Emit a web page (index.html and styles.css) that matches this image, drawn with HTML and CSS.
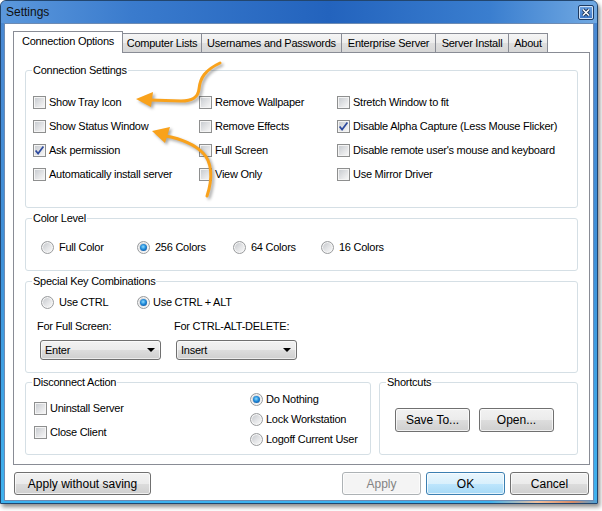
FILE: index.html
```html
<!DOCTYPE html>
<html lang="en">
<head>
    <meta charset="UTF-8">
    <title>Settings</title>
    <link rel="stylesheet" href="styles.css">
</head>
<body>
    <div class="window">
        <div class="titlebar">
            <span class="title">Settings</span>
            <span class="close-btn">
                <svg width="10" height="9" viewBox="0 0 10 9">
                    <path d="M2 1.5 L8 7.5 M8 1.5 L2 7.5" stroke="#1b3354" stroke-width="3.2"/>
                    <path d="M2 1.5 L8 7.5 M8 1.5 L2 7.5" stroke="#fff" stroke-width="1.5"/>
                </svg>
            </span>
        </div>
        <div class="client">
            <div class="tabs">
                <div class="tab active tab-conn">Connection Options</div>
                <div class="tab tab-lists">Computer Lists</div>
                <div class="tab tab-users">Usernames and Passwords</div>
                <div class="tab tab-enterprise">Enterprise Server</div>
                <div class="tab tab-install">Server Install</div>
                <div class="tab tab-about">About</div>
            </div>
            <div class="panel">
                <fieldset class="group conn-group">
                    <legend>Connection Settings</legend>
                    <div class="check-grid">
                        <div class="opt"><span class="check"></span>Show Tray Icon</div>
                        <div class="opt"><span class="check"></span>Remove Wallpaper</div>
                        <div class="opt"><span class="check"></span>Stretch Window to fit</div>
                        <div class="opt"><span class="check"></span>Show Status Window</div>
                        <div class="opt"><span class="check"></span>Remove Effects</div>
                        <div class="opt"><span class="check"><svg width="11" height="11" viewBox="0 0 11 11"><path d="M1.6 5.4 L4.1 8.6 L9.4 1.6" fill="none" stroke="#2d4a9e" stroke-width="1.7"/></svg></span>Disable Alpha Capture (Less Mouse Flicker)</div>
                        <div class="opt"><span class="check"><svg width="11" height="11" viewBox="0 0 11 11"><path d="M1.6 5.4 L4.1 8.6 L9.4 1.6" fill="none" stroke="#2d4a9e" stroke-width="1.7"/></svg></span>Ask permission</div>
                        <div class="opt"><span class="check"></span>Full Screen</div>
                        <div class="opt"><span class="check"></span>Disable remote user's mouse and keyboard</div>
                        <div class="opt"><span class="check"></span>Automatically install server</div>
                        <div class="opt"><span class="check"></span>View Only</div>
                        <div class="opt"><span class="check"></span>Use Mirror Driver</div>
                    </div>
                </fieldset>

                <fieldset class="group color-group">
                    <legend>Color Level</legend>
                    <div class="radio-row">
                        <div class="ropt"><span class="radio"></span>Full Color</div>
                        <div class="ropt"><span class="radio on"></span>256 Colors</div>
                        <div class="ropt"><span class="radio"></span>64 Colors</div>
                        <div class="ropt"><span class="radio"></span>16 Colors</div>
                    </div>
                </fieldset>

                <fieldset class="group keys-group">
                    <legend>Special Key Combinations</legend>
                    <div class="radio-row keys-row">
                        <div class="ropt"><span class="radio"></span>Use CTRL</div>
                        <div class="ropt tight"><span class="radio on"></span>Use CTRL + ALT</div>
                    </div>
                    <div class="combo-row">
                        <div class="combo-field">
                            <div class="combo-label">For Full Screen:</div>
                            <div class="combo first">Enter<span class="combo-arrow"></span></div>
                        </div>
                        <div class="combo-field">
                            <div class="combo-label">For CTRL-ALT-DELETE:</div>
                            <div class="combo second">Insert<span class="combo-arrow"></span></div>
                        </div>
                    </div>
                </fieldset>

                <div class="bottom-row">
                    <fieldset class="group disc-group">
                        <legend>Disconnect Action</legend>
                        <div class="disc-body">
                            <div class="disc-checks">
                                <div class="opt row24"><span class="check"></span>Uninstall Server</div>
                                <div class="opt row24"><span class="check"></span>Close Client</div>
                            </div>
                            <div class="disc-radios">
                                <div class="ropt row20 tight"><span class="radio on"></span>Do Nothing</div>
                                <div class="ropt row20 tight"><span class="radio"></span>Lock Workstation</div>
                                <div class="ropt row20 tight"><span class="radio"></span>Logoff Current User</div>
                            </div>
                        </div>
                    </fieldset>
                    <fieldset class="group short-group">
                        <legend>Shortcuts</legend>
                        <div class="short-body">
                            <button class="btn short-btn">Save To...</button>
                            <button class="btn short-btn">Open...</button>
                        </div>
                    </fieldset>
                </div>
            </div>

            <div class="footer">
                <button class="btn wide-btn">Apply without saving</button>
                <div class="spacer"></div>
                <button class="btn dlg-btn" disabled>Apply</button>
                <button class="btn dlg-btn default">OK</button>
                <button class="btn dlg-btn">Cancel</button>
            </div>
        </div>
    </div>

    <!-- callout arrows drawn over the dialog -->
    <svg class="arrows" width="602" height="511" viewBox="0 0 602 511">
        <g fill="none" stroke="#f9a21c" stroke-width="3" stroke-linecap="round">
            <path d="M220 63 C 205 70 200 78 199 89 C 198 98 192 101 181 101 L 150 100"/>
            <path d="M207 196 C 213 178 212 162 203 153 C 194 144 182 139 166 136"/>
        </g>
        <g fill="#f9a21c">
            <polygon points="136,99 153,92 151,107"/>
            <polygon points="152,131 170,127 165,143"/>
        </g>
    </svg>
</body>
</html>
```

FILE: styles.css
```css
body {
    margin: 0;
    width: 602px;
    height: 511px;
    overflow: hidden;
    background: #fff;
    font-family: "Liberation Sans", Arial, sans-serif;
    font-size: 11px;
    letter-spacing: -0.25px;
    color: #000;
}

/* window frame */
.window {
    width: 598px;
    height: 504px;
    box-sizing: border-box;
    border: 1px solid #22466f;
    border-radius: 6px 6px 0 0;
    padding: 0 3px 2px 3px;
    display: flex;
    flex-direction: column;
    background:
        linear-gradient(to right, #3cb2f0 0%, #3cb2f0 82%, #f2c09c 90%, #d58a66 96%, #4aa2dc 100%) bottom / 100% 3px no-repeat,
        linear-gradient(to bottom, #4a88d2 0%, #3f90d8 50%, #3fb2ef 100%);
    box-shadow: 2px 3px 4px rgba(0, 0, 0, 0.45);
}
.titlebar {
    height: 22px;
    margin: 0 -3px;
    padding: 0 3px 0 5px;
    display: flex;
    justify-content: space-between;
    align-items: flex-start;
    border-radius: 5px 5px 0 0;
    background: linear-gradient(to right, #5b98dc 0%, #3a7bcd 22%, #2363bd 55%, #3a7ecf 82%, #71a9e2 100%);
}
.title {
    font-size: 12px;
    letter-spacing: 0;
    line-height: 22px;
    color: #101010;
}
.close-btn {
    margin-top: 4px;
    width: 16px;
    height: 15px;
    box-sizing: border-box;
    border: 1px solid #1e3a60;
    border-radius: 2px;
    box-shadow: inset 0 0 0 1px #cfe1f6;
    background: linear-gradient(#6fa4e2, #3a75c6);
    display: flex;
    align-items: center;
    justify-content: center;
}
.client {
    flex: 1;
    background: #fff;
    border: 1px solid #6d8bb3;
    display: flex;
    flex-direction: column;
}

/* tabs */
.tabs {
    display: flex;
    align-items: flex-end;
    height: 21px;
    margin: 7px 0 0 8px;
}
.tab {
    height: 19px;
    box-sizing: border-box;
    border: 1px solid #898c95;
    border-bottom: none;
    margin-left: -1px;
    text-align: center;
    line-height: 18px;
    white-space: nowrap;
    background: linear-gradient(#f5f5f5 0%, #ececec 50%, #dfdfdf 50%, #d6d6d6 100%);
}
.tab:first-child {
    margin-left: 0;
}
.tab.active {
    height: 22px;
    margin-bottom: -1px;
    line-height: 19px;
    background: #fff;
    position: relative;
    z-index: 1;
}
.tab-conn { width: 110px; }
.tab-lists { width: 80px; }
.tab-users { width: 141px; }
.tab-enterprise { width: 95px; }
.tab-install { width: 74px; }
.tab-about { width: 40px; }

.panel {
    margin-left: 8px;
    width: 577px;
    height: 413px;
    box-sizing: border-box;
    border: 1px solid #898c95;
    padding: 10px 11px 0;
    background: #fff;
}

/* group boxes */
.group {
    margin: 0;
    padding: 0;
    min-width: 0;
    box-sizing: border-box;
    border: 1px solid #d5dfe5;
    border-radius: 3px;
}
.group legend {
    margin-left: 6px;
    padding: 0 1px;
    line-height: 14px;
}
.conn-group { height: 145px; }
.color-group { height: 60px; margin-top: 3px; }
.keys-group { height: 99px; margin-top: 3px; }
.bottom-row {
    display: flex;
    gap: 8px;
    margin-top: 2px;
}
.disc-group { width: 346px; height: 80px; }
.short-group { flex: 1; height: 80px; }

/* checkboxes and radios */
.check-grid {
    display: grid;
    grid-template-columns: 166px 138px 1fr;
    grid-auto-rows: 24px;
    margin: 13px 0 0 7px;
}
.opt, .ropt {
    display: flex;
    align-items: center;
    white-space: nowrap;
}
.opt { gap: 3px; }
.ropt { gap: 5px; }
.ropt.tight { gap: 3px; }
.check {
    width: 13px;
    height: 13px;
    flex: none;
    box-sizing: border-box;
    border: 1px solid #8e8f8f;
    box-shadow: inset 0 0 0 1px #f4f4f4;
    background: linear-gradient(135deg, #c4c8cd 0%, #e3e4e6 55%, #fafafa 100%);
}
.check svg {
    display: block;
}
.radio {
    width: 13px;
    height: 13px;
    flex: none;
    box-sizing: border-box;
    border: 1px solid #9a9c9e;
    border-radius: 50%;
    box-shadow: inset 0 0 0 1px #f6f6f6;
    background: linear-gradient(135deg, #c2c5c9 0%, #e4e5e7 55%, #fbfbfb 100%);
    display: flex;
    align-items: center;
    justify-content: center;
}
.radio.on::after {
    content: "";
    width: 7px;
    height: 7px;
    border-radius: 50%;
    background: radial-gradient(circle at 45% 40%, #8fdcff 0%, #1f8ad9 45%, #0b3f8a 100%);
}

.radio-row {
    display: grid;
    grid-template-columns: 96px 96px 88px auto;
    height: 16px;
    margin: 14px 0 0 15px;
}
.radio-row.keys-row {
    margin-top: 6px;
}

/* dropdowns */
.combo-row {
    display: grid;
    grid-template-columns: 137px 1fr;
    margin: 9px 0 0 11px;
}
.combo-label {
    line-height: 14px;
}
.combo {
    width: 121px;
    height: 20px;
    margin-top: 7px;
    box-sizing: border-box;
    border: 1px solid #707070;
    border-radius: 3px;
    padding: 0 5px 0 4px;
    display: flex;
    align-items: center;
    justify-content: space-between;
    box-shadow: inset 0 0 0 1px rgba(255, 255, 255, 0.6);
    background: linear-gradient(#f2f2f2 0%, #ebebeb 50%, #dddddd 50%, #cfcfcf 100%);
}
.combo.first { margin-left: 3px; }
.combo.second { margin-left: 2px; }
.combo-arrow {
    width: 0;
    height: 0;
    border-left: 4px solid transparent;
    border-right: 4px solid transparent;
    border-top: 4px solid #000;
}

/* disconnect action */
.disc-body {
    display: flex;
}
.disc-checks {
    width: 216px;
    padding: 7px 0 0 8px;
}
.row24 { height: 24px; }
.row20 { height: 20px; }

/* buttons */
.btn {
    height: 23px;
    box-sizing: border-box;
    border: 1px solid #707070;
    border-radius: 3px;
    padding: 0;
    font-family: "Liberation Sans", Arial, sans-serif;
    font-size: 12px;
    color: #000;
    box-shadow: inset 0 0 0 1px rgba(255, 255, 255, 0.7);
    background: linear-gradient(#f2f2f2 0%, #ebebeb 50%, #dddddd 50%, #cfcfcf 100%);
}
.btn.default {
    border-color: #3c7fb1;
    background: linear-gradient(#eaf6fd 0%, #d9f0fc 50%, #bee6fd 50%, #a7d9f5 100%);
}
.btn:disabled {
    border-color: #adb2b5;
    color: #838383;
    background: #f4f4f4;
}
.short-body {
    display: flex;
    gap: 9px;
    padding: 19px 0 0 15px;
}
.short-btn {
    width: 75px;
    height: 24px;
}
.footer {
    display: flex;
    gap: 5px;
    margin-top: 7px;
    padding: 0 4px 0 9px;
}
.footer .spacer {
    flex: 1;
}
.wide-btn { width: 137px; }
.dlg-btn { width: 79px; }

.arrows {
    position: absolute;
    top: 0;
    left: 0;
    pointer-events: none;
    filter: drop-shadow(2px 2px 1.5px rgba(0, 0, 0, 0.35));
}
```
